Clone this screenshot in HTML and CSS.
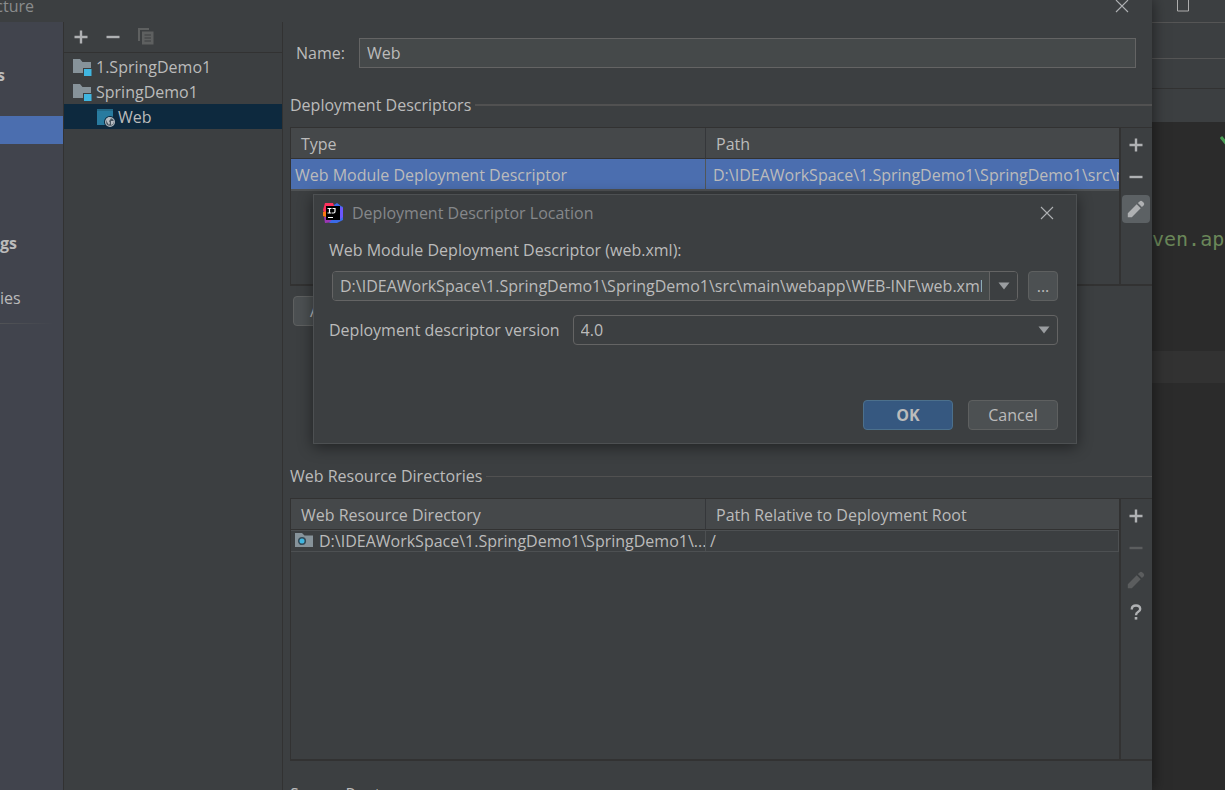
FILE: index.html
```html
<!DOCTYPE html>
<html lang="en">
<head>
<meta charset="utf-8">
<title>Project Structure</title>
<link rel="stylesheet" href="styles.css">
</head>
<body>
<svg class="defs" aria-hidden="true">
  <symbol id="plus" viewBox="0 0 16 16"><path d="M8 1.5v13M1.5 8h13" stroke="currentColor" stroke-width="2.4"/></symbol>
  <symbol id="minus" viewBox="0 0 16 16"><path d="M1.5 8h13" stroke="currentColor" stroke-width="2.4"/></symbol>
  <symbol id="pencil" viewBox="0 0 18 18"><path d="M.8 17.2v-4L9.700 4.300l4 4-8.900 8.900zM10.900 3.100l1.700-1.700q1.400-1.400 2.800 0l1.200 1.200q1.400 1.400 0 2.800l-1.700 1.700z" fill="currentColor"/></symbol>
  <symbol id="close" viewBox="0 0 14 14"><path d="M1 1l12 12M13 1L1 13" stroke="currentColor" stroke-width="1.100" fill="none"/></symbol>
  <symbol id="arrow" viewBox="0 0 12 8"><path d="M.5 .5h11L6 7.500z" fill="currentColor"/></symbol>
  <symbol id="module" viewBox="0 0 20 18"><path d="M1 1h7l2.500 3H19v6h-8v5H1z" fill="#87939a"/><path d="M12 11h7.500v7H12z" fill="#40b6e0"/></symbol>
</svg>
<div class="screen">
  <section class="window">
    <header class="titlebar">
      <span class="tail">cture</span>
      <button class="plain" aria-label="Close"><svg width="14" height="14"><use href="#close"/></svg></button>
    </header>
    <div class="body">
      <nav class="sidebar">
        <b class="group tail">s</b>
        <a class="current" href="#" aria-label="Current section"></a>
        <b class="group second">gs</b>
        <a class="entry" href="#">ies</a>
        <hr>
      </nav>
      <aside class="modules">
        <div class="toolbar">
          <button class="plain" aria-label="Add"><svg width="16" height="16"><use href="#plus"/></svg></button>
          <button class="plain" aria-label="Remove"><svg width="16" height="16"><use href="#minus"/></svg></button>
          <button class="plain dim" aria-label="Copy"><svg width="18" height="18" viewBox="0 0 18 18"><path d="M1 0h11v2H3v11H1z" fill="#5e6060"/><path d="M5 3.500h11.500v13H5z" fill="#5e6060"/><path d="M7.500 7h6.500M7.500 10h6.500M7.500 13h6.500" stroke="#3c3f41"/></svg></button>
        </div>
        <ul class="tree">
          <li><svg width="20" height="18"><use href="#module"/></svg>1.SpringDemo1</li>
          <li><svg width="20" height="18"><use href="#module"/></svg>SpringDemo1</li>
          <li class="selected"><svg width="20" height="20" viewBox="0 0 20 20"><path d="M1 2h16v16H1z" fill="#287b9f"/><path d="M1 2h16v2H1z" fill="#236987"/><circle cx="14" cy="15" r="6" fill="#0d293e"/><circle cx="14" cy="15" r="4.400" fill="#47545f" stroke="#adb5bb" stroke-width="1.200"/><path d="M10 12l3-2 2 1-1 2-1 1 1 2-1 2-2-3zM15 14h3l-1 3-2 1z" fill="#b8bec3"/></svg>Web</li>
        </ul>
      </aside>
      <main class="content">
        <div class="name-row">
          <label for="name">Name:</label>
          <input id="name" class="field" type="text" value="Web">
        </div>
        <h2 class="heading thick">Deployment Descriptors</h2>
        <div class="panel descriptors">
          <div class="grid">
            <table>
              <thead><tr><th>Type</th><th>Path</th></tr></thead>
              <tbody><tr class="chosen"><td>Web Module Deployment Descriptor</td><td class="path">D:\IDEAWorkSpace\1.SpringDemo1\SpringDemo1\src\main</td></tr></tbody>
            </table>
          </div>
          <div class="tools">
            <button class="tool" aria-label="Add"><svg width="16" height="16"><use href="#plus"/></svg></button>
            <button class="tool" aria-label="Remove"><svg width="16" height="16"><use href="#minus"/></svg></button>
            <button class="tool active" aria-label="Edit"><svg width="18" height="18"><use href="#pencil"/></svg></button>
          </div>
        </div>
        <button class="button add" aria-label="Add descriptor">A</button>
        <h2 class="heading">Web Resource Directories</h2>
        <div class="panel resources">
          <div class="grid">
            <table>
              <thead><tr><th>Web Resource Directory</th><th>Path Relative to Deployment Root</th></tr></thead>
              <tbody><tr class="outlined">
                <td><div class="directory"><svg width="18" height="16" viewBox="0 0 18 16"><path d="M0 0h7l2.500 2.500H18V14H0z" fill="#87939a"/><circle cx="7" cy="8" r="3.300" fill="#40b6e0" stroke="#344b58" stroke-width="1.600"/></svg><span>D:\IDEAWorkSpace\1.SpringDemo1\SpringDemo1\...</span></div></td>
                <td>/</td>
              </tr></tbody>
            </table>
          </div>
          <div class="tools">
            <button class="tool" aria-label="Add"><svg width="16" height="16"><use href="#plus"/></svg></button>
            <button class="tool" aria-label="Remove" disabled><svg width="16" height="16"><use href="#minus"/></svg></button>
            <button class="tool" aria-label="Edit" disabled><svg width="18" height="18"><use href="#pencil"/></svg></button>
            <button class="tool" aria-label="Help"><svg width="12" height="16" viewBox="0 0 12 16"><path d="M1.800 5.500V5Q2 1.500 6 1.500T10.200 5Q10.200 6.600 8.200 7.800Q6 9 6 11.300" fill="none" stroke="currentColor" stroke-width="2.400"/><path d="M4.700 13h2.600v2.600H4.700z" fill="currentColor"/></svg></button>
          </div>
        </div>
        <h2 class="heading last">Source Roots</h2>
      </main>
    </div>
    <div class="dialog" role="dialog" aria-labelledby="dialog-title">
      <header class="dialog-title">
        <svg width="22" height="22" viewBox="0 0 22 22"><path d="M3 1l8 0 3 8-11 4-2-5z" fill="#fe315d"/><path d="M1 10l5-1v7l-5-2z" fill="#f97a12"/><path d="M2 15h10v5l-9 1z" fill="#9b36b5"/><path d="M12 3l3-2 4 3 2 1v13l-6 3H7l7-8z" fill="#3b6be8"/><path d="M17 4l4 2v9l-4 3z" fill="#6b57ff"/><path d="M4 4h14v14H4z" fill="#000"/><path d="M5.500 6.500h4M7.500 6.500v4.500M5.500 11h4M10.500 6.500H13v3q0 1.500-1.500 1.500h-1.500M6 15.500h5" fill="none" stroke="#fff" stroke-width="1.200"/></svg>
        <span id="dialog-title">Deployment Descriptor Location</span>
        <button class="plain" aria-label="Close dialog"><svg width="14" height="14"><use href="#close"/></svg></button>
      </header>
      <label for="location">Web Module Deployment Descriptor (web.xml):</label>
      <div class="location">
        <div class="combo">
          <input id="location" type="text" value="D:\IDEAWorkSpace\1.SpringDemo1\SpringDemo1\src\main\webapp\WEB-INF\web.xml">
          <button aria-label="Show history"><svg width="12" height="8"><use href="#arrow"/></svg></button>
        </div>
        <button class="button browse">...</button>
      </div>
      <div class="version">
        <label for="version">Deployment descriptor version</label>
        <div class="select"><select id="version"><option>4.0</option></select><svg width="12" height="8"><use href="#arrow"/></svg></div>
      </div>
      <footer class="actions">
        <button class="button primary">OK</button>
        <button class="button">Cancel</button>
      </footer>
    </div>
  </section>
  <aside class="ide">
    <div class="ide-title"><svg width="14" height="12" viewBox="0 0 14 12"><path d="M1.500 -1.500h11v12.500h-11z" fill="none" stroke="#adadad"/></svg></div>
    <div class="ide-menu"></div>
    <div class="ide-nav"></div>
    <div class="ide-tabs"></div>
    <div class="editor">
      <svg class="check" width="12" height="12" viewBox="0 0 12 12"><path d="M1 2l4 5 6-8" fill="none" stroke="#499c54" stroke-width="3"/></svg>
      <code>ven.apa</code>
      <div class="caret-line"></div>
    </div>
  </aside>
</div>
</body>
</html>
```

FILE: styles.css
```css
* { box-sizing: border-box; }
body {
  margin: 0;
  background: #3c3f41;
  color: #bbb;
  font: 16px/20px "Open Sans", "Noto Sans", sans-serif;
}
button, input, select { font: inherit; color: inherit; margin: 0; }
svg { display: block; flex: none; }
.defs { position: absolute; width: 0; height: 0; }
.screen { display: flex; height: 100vh; overflow: hidden; }
.window {
  position: relative;
  z-index: 1;
  flex: 1;
  min-width: 0;
  display: flex;
  flex-direction: column;
  background: #3c3f41;
  box-shadow: 0 0 14px #0008;
}
.plain { display: flex; padding: 0; border: 0; background: none; color: #afb1b3; }

/* Labels whose end stays in view when the box is narrower than the text */
.tail { display: flex; justify-content: flex-end; }

.titlebar {
  display: flex;
  justify-content: space-between;
  align-items: center;
  height: 22px;
  padding: 0 23px 10px 0;
  color: #8a8c8d;
}
.titlebar .tail { width: 34px; }
.body { flex: 1; min-height: 0; display: flex; }

.sidebar {
  width: 64px;
  display: flex;
  flex-direction: column;
  background: #41444d;
  border-right: 1px solid #323232;
  padding-top: 43px;
}
.sidebar .tail { width: 5px; }
.sidebar .current { height: 28px; margin-top: 31px; background: #4b6eaf; }
.sidebar .second { margin-top: 89px; }
.sidebar .entry { margin-top: 35px; color: inherit; text-decoration: none; }
.sidebar hr {
  width: 54px;
  height: 1px;
  margin: 15px 0 0;
  border: 0;
  background: linear-gradient(90deg, #515356, #41444d);
}

.modules { width: 219px; border-right: 1px solid #323232; }
.toolbar {
  display: flex;
  align-items: center;
  gap: 16px;
  height: 31px;
  padding: 0 9px;
  border-bottom: 1px solid #323232;
}
.tree { margin: 0; padding: 1px 0 0; list-style: none; }
.tree li { display: flex; align-items: center; gap: 4px; height: 25px; padding-left: 8px; }
.tree .selected { gap: 2px; padding-left: 32px; background: #0d293e; }

.content { flex: 1; min-width: 0; display: flex; flex-direction: column; padding: 16px 0 0 7px; overflow: hidden; }
.name-row { display: flex; align-items: center; gap: 14px; padding: 0 16px 0 6px; }
.field {
  flex: 1;
  height: 30px;
  padding: 0 7px;
  background: #45494a;
  border: 1px solid #646464;
}
.heading {
  display: flex;
  align-items: center;
  gap: 4px;
  margin: 27px 0 12px;
  font-size: 16px;
  font-weight: 400;
  white-space: nowrap;
}
.heading::after { content: ""; flex: 1; height: 1px; background: #515151; }
.thick::after { height: 2px; }

.panel { display: flex; flex: none; border: 1px solid #323232; border-width: 1px 0 2px 1px; }
.descriptors { height: 159px; }
.resources { height: 263px; }
.grid { flex: 1; min-width: 0; border-right: 2px solid #323232; }
table { width: 100%; table-layout: fixed; border-collapse: separate; border-spacing: 0; }
th {
  height: 31px;
  padding: 2px 10px 0;
  background: #45484a;
  border-bottom: 1px solid #323232;
  font-weight: 400;
  text-align: left;
}
th + th { border-left: 1px solid #35373a; }
td { padding: 0 0 0 4px; overflow: hidden; white-space: nowrap; }
.chosen td { height: 32px; padding-top: 2px; background: #4b6eaf; border-bottom: 2px solid #4f5254; }
.chosen .path { padding-left: 7px; border-left: 1px solid #515658; }
.outlined td { height: 22px; border: 1px solid #4d5052; border-width: 1px 0; }
.outlined td + td { border-width: 1px; }
.directory { display: flex; align-items: center; gap: 6px; }

.tools {
  width: 31px;
  display: flex;
  flex-direction: column;
  gap: 4px;
  padding: 3px 0 0 1px;
}
.tool {
  display: grid;
  place-items: center;
  width: 28px;
  height: 28px;
  padding: 0;
  border: 0;
  border-radius: 4px;
  background: none;
  color: #afb1b3;
}
.tool:disabled { color: #5b5d5e; }
.tool.active { background: #5c6164; }

.button {
  height: 30px;
  width: 90px;
  padding: 0;
  border: 1px solid #5e6060;
  border-radius: 4px;
  background: #4c5052;
}
.add { flex: none; margin: 10px 0 113px 3px; padding-left: 16px; text-align: left; }
.last { margin-top: 23px; }
.primary { background: #365880; border-color: #4c708c; font-weight: 700; }

.dialog {
  position: absolute;
  top: 194px;
  left: 313px;
  right: 75px;
  padding: 7px 18px 13px 15px;
  background: #3c3f41;
  border: 1px solid #4d5052;
  box-shadow: 0 3px 14px #0007;
}
.dialog-title { display: flex; align-items: center; height: 22px; margin: 0 4px 16px -7px; color: #85878a; }
.dialog-title span { flex: 1; padding-left: 8px; }
.dialog label { display: block; }
.location { display: flex; gap: 10px; margin: 11px 0 14px 3px; }
.combo {
  flex: 1;
  display: flex;
  height: 30px;
  border: 1px solid #646464;
  border-radius: 4px;
  overflow: hidden;
}
.combo input { flex: 1; min-width: 0; padding: 0 7px; border: 0; background: #45494a; }
.combo button {
  width: 28px;
  display: grid;
  place-items: center;
  padding: 0;
  border: 0;
  border-left: 1px solid #646464;
  background: #3c3f41;
  color: #9a9da0;
}
.browse { width: 30px; }
.version { display: flex; align-items: center; gap: 13px; }
.select { position: relative; flex: 1; color: #9a9da0; }
.select select {
  appearance: none;
  width: 100%;
  height: 30px;
  padding: 0 7px;
  border: 1px solid #646464;
  border-radius: 4px;
  background: #3c3f41;
  color: #bbb;
}
.select svg { position: absolute; right: 8px; top: 11px; pointer-events: none; }
.actions { display: flex; justify-content: flex-end; gap: 15px; margin-top: 55px; }

.ide { width: 73px; display: flex; flex-direction: column; overflow: hidden; }
.ide-title { height: 23px; padding: 0 24px; border-bottom: 1px solid #555; }
.ide-menu { height: 36px; border-bottom: 1px solid #555; }
.ide-nav { height: 30px; border-bottom: 1px solid #323232; }
.ide-tabs { height: 33px; }
.editor { flex: 1; background: #2b2b2b; }
.check { margin: 13px 0 0 68px; }
.editor code {
  display: block;
  margin-top: 80px;
  color: #6a8759;
  font: 20px/24px "DejaVu Sans Mono", monospace;
}
.caret-line { height: 32px; margin-top: 100px; background: #323232; }
```
